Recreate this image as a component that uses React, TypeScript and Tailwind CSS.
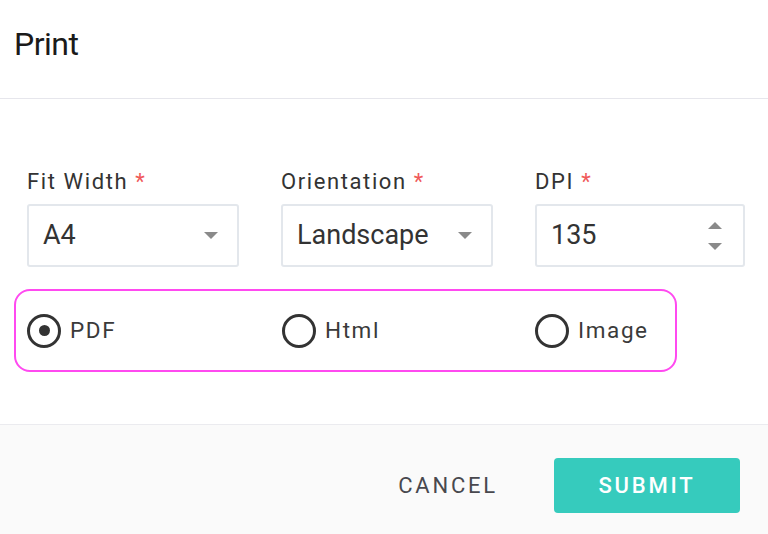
import React from "react";

const font = { fontFamily: "Roboto, 'Noto Sans', sans-serif" };

function Caret() {
  return (
    <svg width="14" height="8" viewBox="0 0 14 8" className="block">
      <path d="M0 0 L14 0 L7 7 Z" fill="#8a8a8a" />
    </svg>
  );
}

function Label({ text }: { text: string }) {
  return (
    <div className="h-[26px] text-[22px] leading-[26px] tracking-[1.6px] text-[#333333] mb-[9px]">
      {text} <span className="text-[#f05a5a]">*</span>
    </div>
  );
}

function Radio({ label, checked }: { label: string; checked?: boolean }) {
  return (
    <div className="flex items-center">
      <div className="w-[34px] h-[34px] rounded-full border-[3px] border-[#333333] flex items-center justify-center">
        {checked && <div className="w-[11px] h-[11px] rounded-full bg-[#333333]" />}
      </div>
      <span className="ml-[9px] text-[22.5px] tracking-[1.6px] text-[#3a3a3a]">{label}</span>
    </div>
  );
}

export default function App() {
  return (
    <div className="w-[768px] h-[534px] bg-white flex flex-col overflow-hidden" style={font}>
      <div className="h-[99px] px-[14px] pt-[25px] border-b border-[#e6e6ec] shrink-0">
        <div className="text-[32px] leading-[38px] text-[#1a1a1a] tracking-[-0.5px]">Print</div>
      </div>
      <div className="px-[14px] pt-[70px] flex-1">
        <div className="ml-[13px] grid grid-cols-[212px_212px_210px] gap-x-[42px]">
          <div>
            <Label text="Fit Width" />
            <div className="h-[63px] border-2 border-[#e3e7ec] rounded-[3px] flex items-center justify-between pl-[14px] pr-[19px]">
              <span className="text-[27px] text-[#333333]">A4</span>
              <Caret />
            </div>
          </div>
          <div>
            <Label text="Orientation" />
            <div className="h-[63px] border-2 border-[#e3e7ec] rounded-[3px] flex items-center justify-between pl-[14px] pr-[19px]">
              <span className="text-[27px] text-[#333333]">Landscape</span>
              <Caret />
            </div>
          </div>
          <div>
            <Label text="DPI" />
            <div className="h-[63px] border-2 border-[#e3e7ec] rounded-[3px] flex items-center justify-between pl-[14px] pr-[21px]">
              <span className="text-[27px] text-[#333333]">135</span>
              <div className="flex flex-col gap-[14px]">
                <svg width="14" height="8" viewBox="0 0 14 8" className="block">
                  <path d="M0 8 L14 8 L7 1 Z" fill="#8a8a8a" />
                </svg>
                <Caret />
              </div>
            </div>
          </div>
        </div>
        <div className="mt-[22px] w-[663px] h-[83px] border-2 border-[#ff4af0] rounded-[16px] pl-[11px] grid grid-cols-[255px_253px_1fr] items-center">
          <Radio label="PDF" checked />
          <Radio label="Html" />
          <Radio label="Image" />
        </div>
      </div>
      <div className="h-[110px] shrink-0 bg-[#fafafa] border-t border-[#ebebef] flex items-center justify-end pr-[28px] pt-[12px]">
        <button className="text-[22px] tracking-[2.8px] text-[#48484e] mr-[56px]">CANCEL</button>
        <button className="w-[186px] h-[55px] rounded-[4px] bg-[#36cbbd] text-white text-[22px] tracking-[2.8px] font-medium">
          SUBMIT
        </button>
      </div>
    </div>
  );
}
